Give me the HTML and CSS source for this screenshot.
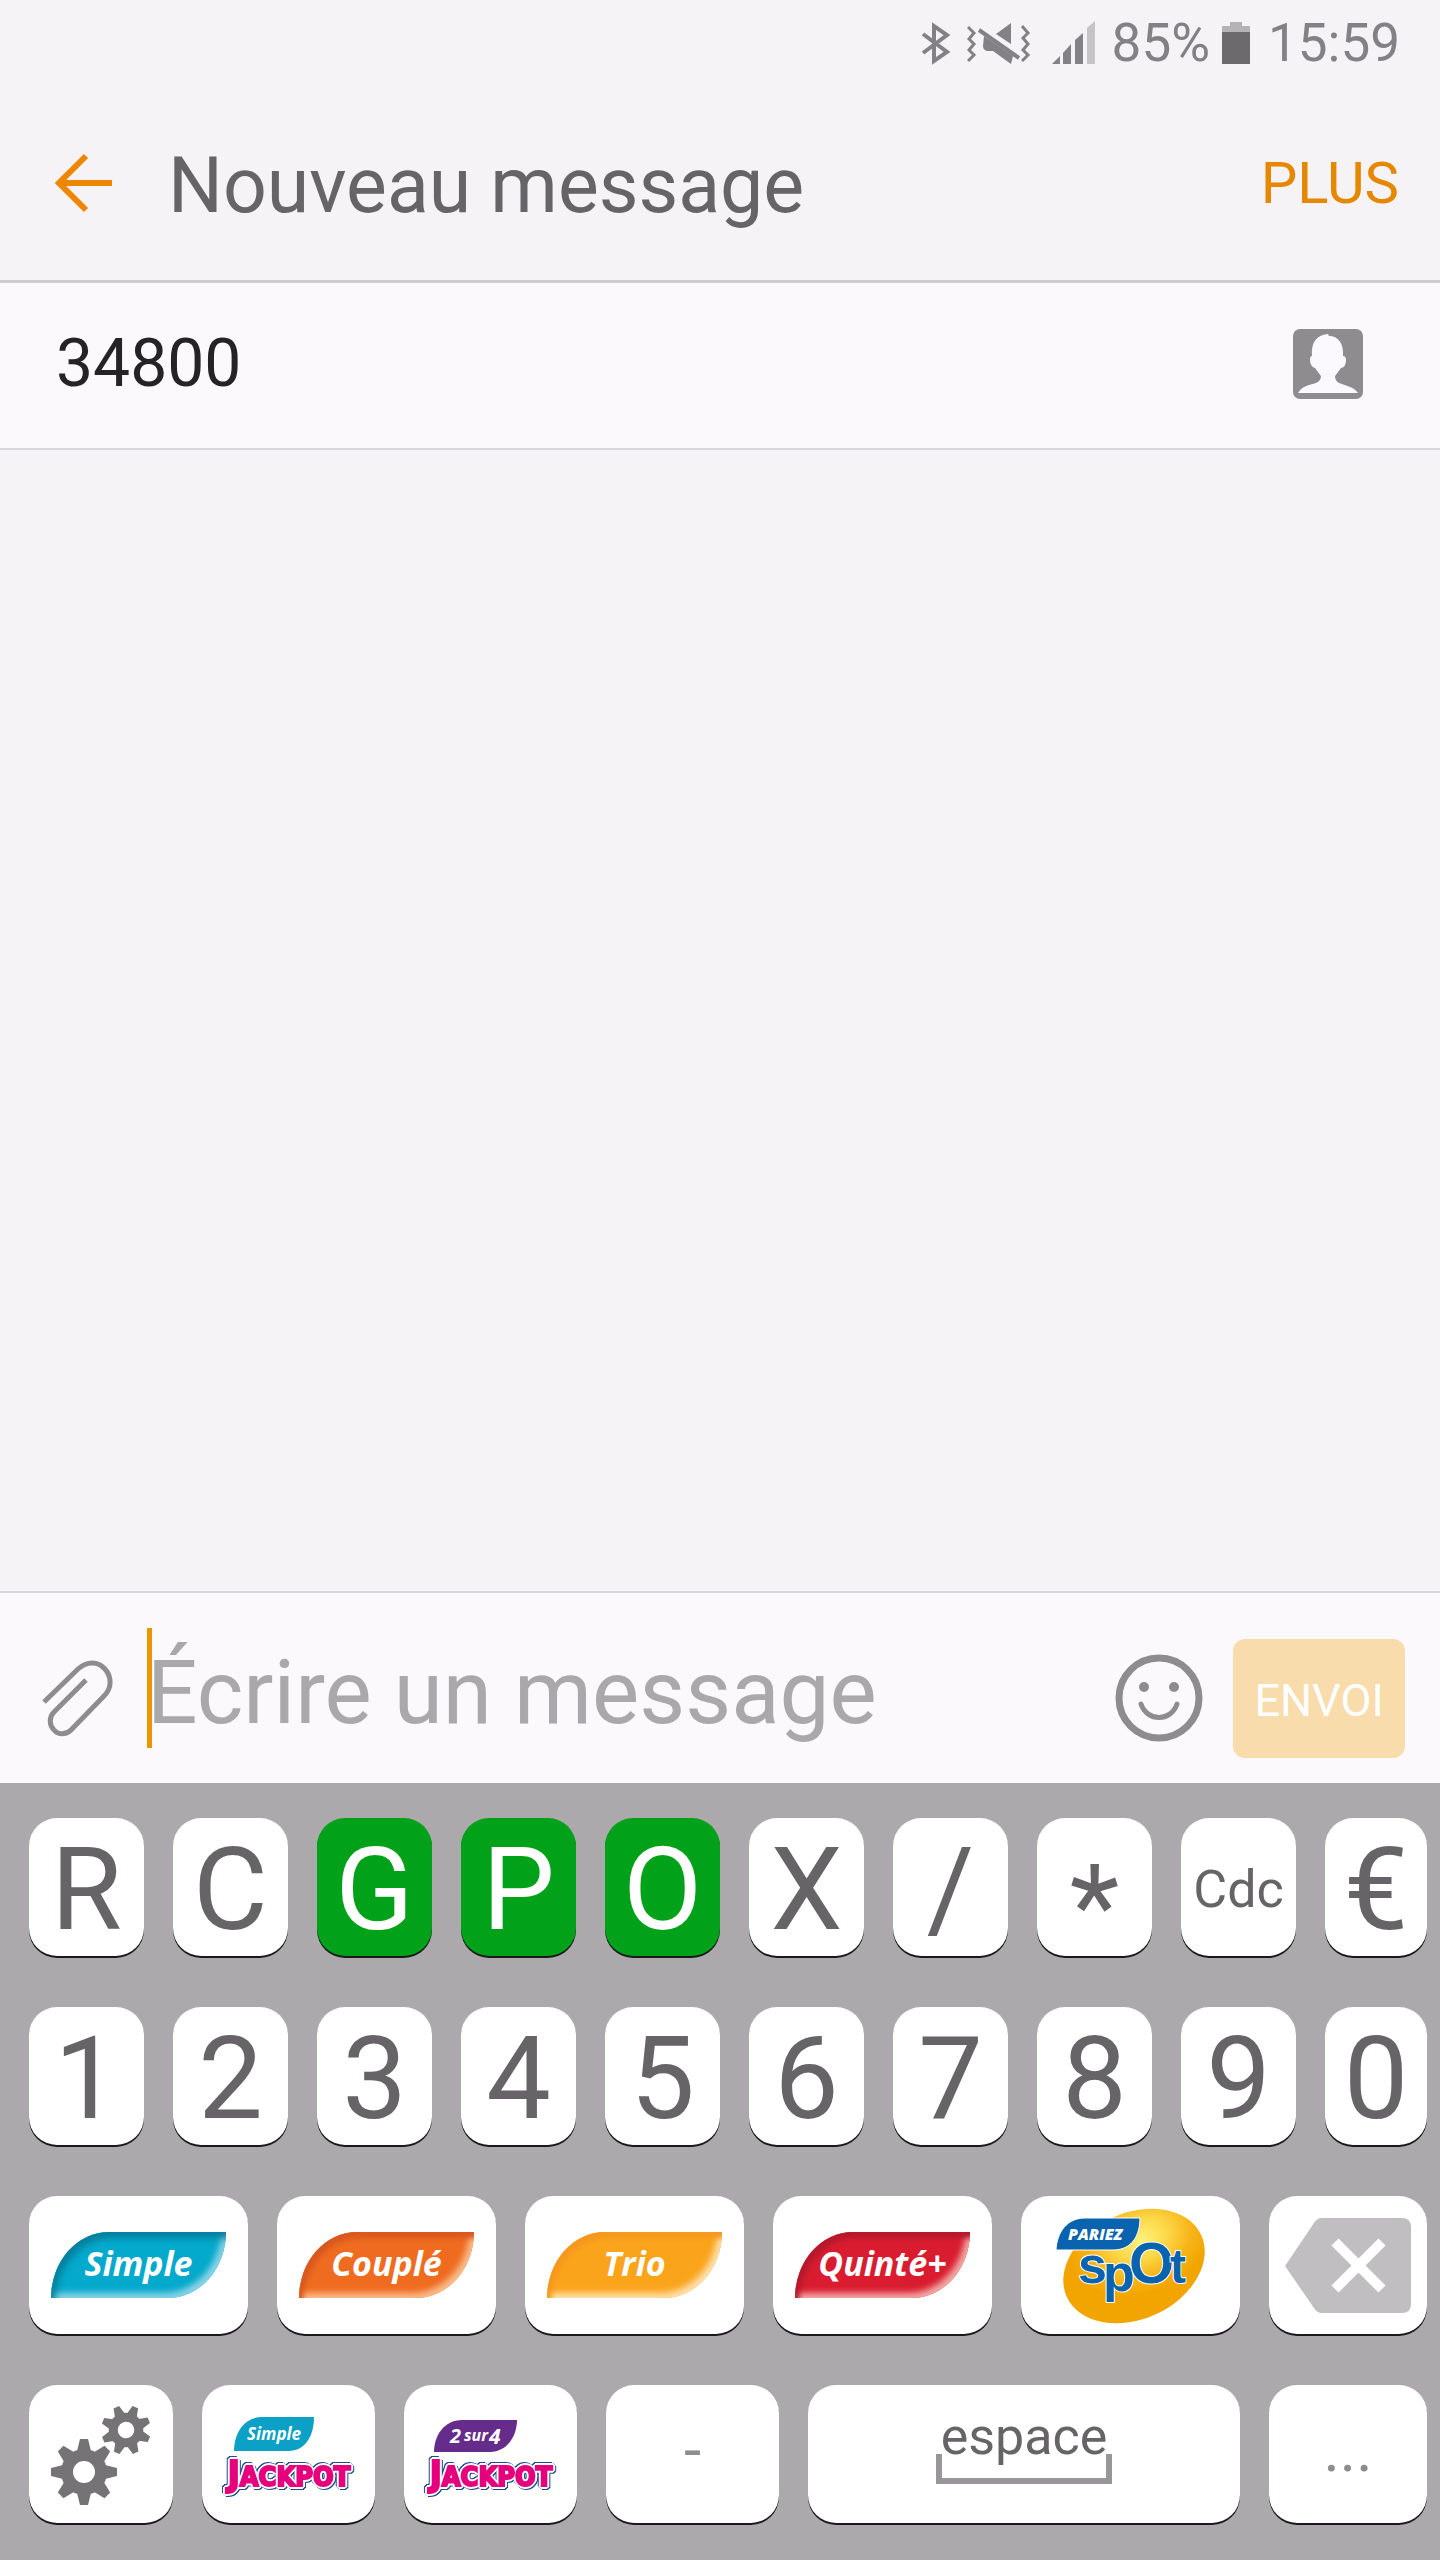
FILE: index.html
```html
<!DOCTYPE html>
<html lang="fr">
<head>
<meta charset="utf-8">
<meta name="viewport" content="width=device-width, initial-scale=1">
<title>Nouveau message</title>
<link rel="stylesheet" href="styles.css">
</head>
<body>
<div class="screen">
  <div class="status">
    <svg class="status-bluetooth" width="30" height="44" viewBox="0 0 30 44" aria-hidden="true"><path d="M2 13 26 31 13 40V5L26 14 2 32" fill="none" stroke="#838185" stroke-width="4"/></svg>
    <svg class="status-mute" width="66" height="44" viewBox="0 0 66 44" aria-hidden="true">
      <g fill="none" stroke="#838185"><path d="M1 6 7 12 2 18 7 23 2 29 7 34 1 40M55 5 61 12 56 17 61 23 56 29 61 34 55 40" stroke-width="3"/><path d="M12 9 52 37" stroke-width="4"/></g>
      <path d="M29 13 44 2V23ZM17 15 46 35 44 43 26 30H20Q16 29 16 25Z" fill="#838185"/>
    </svg>
    <svg class="status-signal" width="45" height="44" viewBox="0 0 45 44" aria-hidden="true"><path d="M1 43 9 35V43ZM12 43V32L20 23V43ZM24 43V19L32 12V43Z" fill="#838185"/><path d="M36 43V7L44 0V43Z" fill="#c5c3c6"/></svg>
    <span>85%</span>
    <svg class="status-battery" width="28" height="42" viewBox="0 0 28 42" aria-hidden="true"><path d="M0 4H8V0H20V4H28V10H0Z" fill="#b5b3b6"/><path d="M0 10H28V42H0Z" fill="#6c6a6d"/></svg>
    <time>15:59</time>
  </div>

  <header class="appbar">
    <button class="icon-button" type="button" aria-label="Retour"><svg width="58" height="60" viewBox="0 0 58 60"><path d="M31 3 4 30 31 57M4 30H57" fill="none" stroke="#ee8600" stroke-width="6"/></svg></button>
    <h1 class="title">Nouveau message</h1>
    <button class="more" type="button">PLUS</button>
  </header>

  <div class="recipient">
    <input class="recipient-input" type="text" value="34800" aria-label="Destinataire">
    <button class="icon-button" type="button" aria-label="Contacts"><svg width="70" height="70" viewBox="0 0 70 70"><rect width="70" height="70" rx="7" fill="#8e8c8f"/><path d="M5 64C9 57 16 56 23 54Q28 52 28 47L22 39Q17 38 17 30Q17 27 19 27C18 14 23 6 35 5L36 7C45 7 51 14 50 27Q53 27 53 31Q53 38 48 39L42 47Q42 52 46 54C54 57 61 58 65 64Z" fill="#fbf9fd"/></svg></button>
  </div>

  <main class="conversation"></main>

  <form class="compose">
    <button class="icon-button" type="button" aria-label="Joindre"><svg width="72" height="77" viewBox="0 0 72 77"><path d="M3 42 37 9C46 1 57 1 64 9C71 17 71 28 63 36L30 70C25 75 17 75 13 70C8 65 8 57 13 52L45 20" fill="none" stroke="#8e8c8f" stroke-width="5"/></svg></button>
    <div class="field"><input class="message-input" type="text" placeholder="Écrire un message" aria-label="Message"></div>
    <button class="icon-button smiley" type="button" aria-label="Émoticônes"><svg width="88" height="88" viewBox="0 0 88 88"><circle cx="44" cy="44" r="40" fill="none" stroke="#8e8c8f" stroke-width="7"/><circle cx="29" cy="33" r="5" fill="#8e8c8f"/><circle cx="59" cy="33" r="5" fill="#8e8c8f"/><path d="M26 50C32 68 56 68 62 50" fill="none" stroke="#8e8c8f" stroke-width="5" stroke-linecap="round"/></svg></button>
    <button class="send" type="submit" disabled>ENVOI</button>
  </form>

  <div class="keyboard">
    <div class="row row-ten">
      <button class="key" type="button">R</button>
      <button class="key" type="button">C</button>
      <button class="key key-green" type="button">G</button>
      <button class="key key-green" type="button">P</button>
      <button class="key key-green" type="button">O</button>
      <button class="key" type="button">X</button>
      <button class="key" type="button">/</button>
      <button class="key key-star" type="button">*</button>
      <button class="key key-word" type="button">Cdc</button>
      <button class="key" type="button">€</button>
    </div>
    <div class="row row-ten">
      <button class="key" type="button">1</button>
      <button class="key" type="button">2</button>
      <button class="key" type="button">3</button>
      <button class="key" type="button">4</button>
      <button class="key" type="button">5</button>
      <button class="key" type="button">6</button>
      <button class="key" type="button">7</button>
      <button class="key" type="button">8</button>
      <button class="key" type="button">9</button>
      <button class="key" type="button">0</button>
    </div>
    <div class="row row-bets">
      <button class="key key-art" type="button"><span class="bet bet-simple">Simple</span></button>
      <button class="key key-art" type="button"><span class="bet bet-couple">Couplé</span></button>
      <button class="key key-art" type="button"><span class="bet bet-trio">Trio</span></button>
      <button class="key key-art" type="button"><span class="bet bet-quinte">Quinté+</span></button>
      <button class="key key-art" type="button">
        <svg width="219" height="138" viewBox="0 0 219 138">
          <defs><radialGradient id="egg" cx="0.62" cy="0.3" r="0.5"><stop offset="0" stop-color="#fff27c"/><stop offset="0.35" stop-color="#fdd94a"/><stop offset="0.7" stop-color="#f7b51a"/><stop offset="1" stop-color="#f2a500"/></radialGradient></defs>
          <ellipse cx="113" cy="70" rx="74" ry="53" transform="rotate(-25 113 70)" fill="url(#egg)"/>
          <path d="M35 54C36 36 46 22 64 22H119C119 38 112 54 92 54Z" fill="#0a63ae" stroke="#fff" stroke-width="1"/>
          <text class="spot-label" x="47" y="44">PARIEZ</text>
          <text class="spot-name" y="87"><tspan x="57" font-size="52">s</tspan><tspan x="82" y="95" font-size="52">p</tspan><tspan x="108" y="87" font-size="58">O</tspan><tspan x="149" y="87" font-size="48">t</tspan></text>
        </svg>
      </button>
      <button class="key key-art" type="button" aria-label="Effacer">
        <svg width="158" height="138" viewBox="0 0 158 138"><path d="M16 70 45 27Q48 22 53 22H133Q142 22 142 31V108Q142 117 133 117H53Q48 117 45 112Z" fill="#c0bec1"/><path d="M66 46 113 93M113 46 66 93" stroke="#fff" stroke-width="10"/></svg>
      </button>
    </div>
    <div class="row row-tools">
      <button class="key key-art" type="button" aria-label="Réglages">
        <svg width="144" height="138" viewBox="0 0 144 138">
          <defs><path id="tooth" d="M-7 -21-4 -33H4L7 -21Z"/></defs>
          <g fill="#757376">
            <g transform="translate(55 87)">
              <circle r="17" fill="none" stroke="#757376" stroke-width="12"/>
              <use href="#tooth"/><use href="#tooth" transform="rotate(45)"/><use href="#tooth" transform="rotate(90)"/><use href="#tooth" transform="rotate(135)"/><use href="#tooth" transform="rotate(180)"/><use href="#tooth" transform="rotate(225)"/><use href="#tooth" transform="rotate(270)"/><use href="#tooth" transform="rotate(315)"/>
            </g>
            <g transform="translate(97 45) rotate(22) scale(0.75)">
              <circle r="17" fill="none" stroke="#757376" stroke-width="12"/>
              <use href="#tooth"/><use href="#tooth" transform="rotate(45)"/><use href="#tooth" transform="rotate(90)"/><use href="#tooth" transform="rotate(135)"/><use href="#tooth" transform="rotate(180)"/><use href="#tooth" transform="rotate(225)"/><use href="#tooth" transform="rotate(270)"/><use href="#tooth" transform="rotate(315)"/>
            </g>
          </g>
        </svg>
      </button>
      <button class="key key-art" type="button">
        <svg width="173" height="138" viewBox="0 0 173 138">
          <path d="M32 66C32 48 42 32 60 32H112C112 50 104 66 86 66Z" fill="#0ba0c6"/>
          <text class="jackpot-label" x="72" y="55" font-size="17" text-anchor="middle">Simple</text>
          <g class="jackpot-outline"><text class="jackpot" x="87" y="101" text-anchor="middle"><tspan font-size="36">J</tspan>ACKPOT</text></g>
        </svg>
      </button>
      <button class="key key-art" type="button">
        <svg width="173" height="138" viewBox="0 0 173 138">
          <path d="M30 67C30 51 40 35 58 35H113C113 51 103 67 86 67Z" fill="#662c8b"/>
          <text class="jackpot-label" x="46" y="58" font-size="20">2 <tspan x="60" y="56" font-size="16">sur</tspan><tspan x="85" y="59" font-size="21">4</tspan></text>
          <g class="jackpot-outline"><text class="jackpot" x="87" y="101" text-anchor="middle"><tspan font-size="36">J</tspan>ACKPOT</text></g>
        </svg>
      </button>
      <button class="key key-mark" type="button">-</button>
      <button class="key key-space" type="button"><span class="space-label">espace</span></button>
      <button class="key key-mark" type="button">...</button>
    </div>
  </div>
</div>
</body>
</html>
```

FILE: styles.css
```css
* { box-sizing: border-box; }

body {
  margin: 0;
  font-family: Roboto, "Liberation Sans", sans-serif;
  color: #666467;
  background: #f5f3f6;
}

button, input {
  margin: 0;
  padding: 0;
  border: 0;
  background: none;
  font: inherit;
  color: inherit;
}

button { cursor: pointer; }
svg { display: block; flex: none; }
input { min-width: 0; outline: none; }
.icon-button { flex: none; }

.screen {
  display: flex;
  flex-direction: column;
  min-height: 100vh;
}

/* Status bar */
.status {
  display: flex;
  align-items: center;
  justify-content: flex-end;
  height: 86px;
  padding-right: 40px;
  font-size: 53px;
  line-height: 60px;
  color: #838185;
}
.status-mute { margin-left: 16px; }
.status-signal { margin: 0 16px 0 18px; }
.status-battery { margin: 0 18px 0 12px; }

/* Title bar */
.appbar {
  display: flex;
  align-items: center;
  height: 197px;
  padding: 0 41px 0 55px;
  border-bottom: 3px solid #cfcdd1;
}
.title {
  flex: 1;
  margin: 0 0 0 55px;
  padding-top: 6px;
  font-size: 77px;
  font-weight: 400;
  line-height: 90px;
}
.more {
  font-size: 58px;
  line-height: 68px;
  color: #e68700;
}

/* Recipient */
.recipient {
  display: flex;
  align-items: center;
  height: 167px;
  padding: 0 77px 4px 56px;
  background: #fbf9fc;
  border-bottom: 2px solid #d7d5d9;
}
.recipient-input {
  flex: 1;
  font-size: 66px;
  line-height: 80px;
  color: #252326;
}

.conversation { flex: 1; }

/* Message entry */
.compose {
  display: flex;
  align-items: center;
  padding: 20px 35px 0 41px;
  min-height: 192px;
  background: #fbf9fc;
  border-top: 2px solid #d7d5d9;
}
.field {
  position: relative;
  flex: 1;
  display: flex;
  min-width: 0;
  margin: 0 0 12px 34px;
}
.field::before {
  content: "";
  position: absolute;
  top: -4px;
  left: 0;
  width: 5px;
  height: 120px;
  background: #ea9600;
}
.message-input {
  flex: 1;
  height: 120px;
  font-size: 89px;
}
.message-input::placeholder { color: #aaa8ab; opacity: 1; }
.smiley { margin-right: 30px; }
.send {
  flex: none;
  width: 172px;
  height: 119px;
  padding-top: 4px;
  border-radius: 12px;
  font-size: 45px;
  color: #fff;
  background: #f8dcab;
}

/* Keyboard */
.keyboard {
  display: flex;
  flex-direction: column;
  gap: 51px;
  padding: 35px 13px 37px 29px;
  background: #aba9ac;
}
.row { display: grid; gap: 29px; }
.row-ten { grid-template-columns: repeat(9, 115fr) 102fr; }
.row-bets { grid-template-columns: repeat(5, 219fr) 158fr; }
.row-tools { grid-template-columns: 144fr 173fr 173fr 173fr 432fr 158fr; }

.key {
  display: flex;
  align-items: center;
  justify-content: center;
  min-width: 0;
  height: 138px;
  padding-top: 6px;
  border-radius: 28px;
  font-size: 115px;
  line-height: 132px;
  background: #fff;
  box-shadow: 0 2px 0 #1a181b;
}
.key-green { color: #fff; background: #02a11a; }
.key-star { padding-top: 40px; }
.key-word { font-size: 52px; }
.key-mark { padding: 0 0 8px; font-size: 62px; color: #8e8c8f; }
.key-art { padding: 0; }

.key-space { padding: 0 0 34px; }
.space-label {
  position: relative;
  font-size: 52px;
  line-height: 62px;
}
.space-label::after {
  content: "";
  position: absolute;
  left: -5px;
  right: -5px;
  top: 48px;
  height: 24px;
  border: 6px solid #989699;
  border-top: 0;
}

/* Bet badges */
.bet {
  width: 175px;
  height: 66px;
  border-radius: 58px 0 58px 0 / 66px 0 66px 0;
  font-family: "Open Sans", "Noto Sans", sans-serif;
  font-size: 34px;
  font-style: italic;
  font-weight: 700;
  line-height: 62px;
  text-align: center;
  color: #fff;
}
.bet-simple { background: #04a9cc; box-shadow: inset 4px 6px 7px #067f9d, inset -4px -5px 6px #8fd4e6; }
.bet-couple { background: #ef6b1f; box-shadow: inset 4px 6px 5px #d9581f, inset -4px -5px 6px #f8bd8e; }
.bet-trio { background: #faa41c; box-shadow: inset 4px 6px 5px #f6981d, inset -4px -5px 6px #fde0ad; }
.bet-quinte { background: #d91c30; box-shadow: inset 4px 6px 5px #b51a2b, inset -4px -5px 6px #f1aba6; }

.spot-label {
  font: italic 800 16px "Open Sans", sans-serif;
  fill: #fff;
}
.spot-name {
  font-family: "Liberation Sans", Arial, sans-serif;
  font-weight: 700;
  fill: #0a63ae;
  stroke: #fff;
  stroke-width: 2px;
  paint-order: stroke;
}
.jackpot-label {
  font-family: "Open Sans", sans-serif;
  font-weight: 700;
  font-style: italic;
  fill: #fff;
}

/* Pink lettering, white halo, navy outer edge */
.jackpot {
  font-family: "Liberation Sans Narrow", "DejaVu Sans Condensed", sans-serif;
  font-size: 27px;
  font-weight: 700;
  fill: #e6007e;
  stroke: #e6007e;
  stroke-width: 2px;
  filter: drop-shadow(1px 1px 0 #fff) drop-shadow(-1px -1px 0 #fff) drop-shadow(1px -1px 0 #fff) drop-shadow(-1px 1px 0 #fff);
}
.jackpot-outline {
  filter: drop-shadow(1px 1px 0 #1c4c8d) drop-shadow(-1px -1px 0 #1c4c8d);
}
```
